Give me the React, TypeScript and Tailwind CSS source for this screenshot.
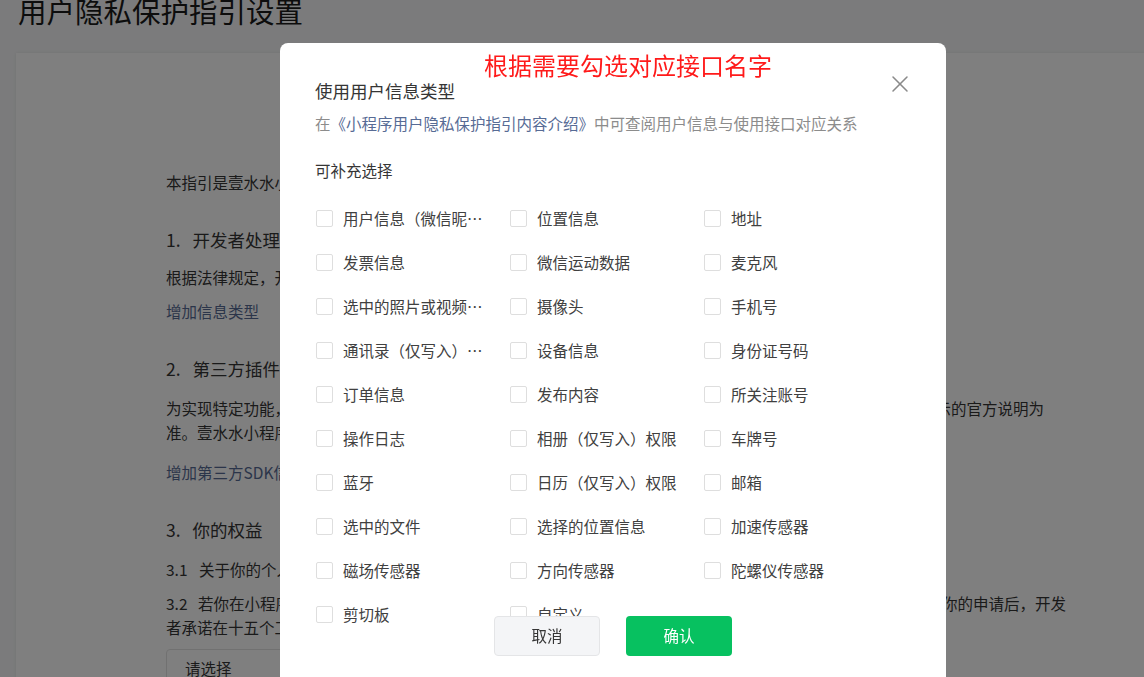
import { X } from "lucide-react";

const items = [
    "用户信息（微信昵称、头像）",
    "位置信息",
    "地址",
    "发票信息",
    "微信运动数据",
    "麦克风",
    "选中的照片或视频信息",
    "摄像头",
    "手机号",
    "通讯录（仅写入）权限",
    "设备信息",
    "身份证号码",
    "订单信息",
    "发布内容",
    "所关注账号",
    "操作日志",
    "相册（仅写入）权限",
    "车牌号",
    "蓝牙",
    "日历（仅写入）权限",
    "邮箱",
    "选中的文件",
    "选择的位置信息",
    "加速传感器",
    "磁场传感器",
    "方向传感器",
    "陀螺仪传感器",
    "剪切板",
    "自定义",
];

function Line({ children, className = "" }: { children: React.ReactNode; className?: string }) {
    return <div className={`whitespace-nowrap leading-[24px] ${className}`}>{children}</div>;
}

function PageBehind() {
    return (
        <div className="h-[677px] w-full overflow-hidden bg-[#f6f7f8] px-[16px]">
            <h1 className="-mt-[4px] pl-[2px] text-[28.5px] leading-[30px] text-[#1a1a1a]">用户隐私保护指引设置</h1>

            <div className="mt-[27px] h-[700px] w-[1200px] bg-white pl-[150px] pt-[117px] text-[15.5px] text-[#353535] shadow-[0_0_3px_rgba(0,0,0,0.08)]">
                <Line>本指引是壹水水小程序开发者为处理你的个人信息而制定。</Line>

                <Line className="mt-[34px] text-[17.5px]">
                    <span className="mr-[12px]">1.</span>开发者处理的信息
                </Line>
                <Line className="mt-[13px]">根据法律规定，开发者仅处理实现小程序功能所必要的信息。</Line>
                <Line className="mt-[10px] text-[#576b95]">增加信息类型</Line>

                <Line className="mt-[34px] text-[17.5px]">
                    <span className="mr-[12px]">2.</span>第三方插件信息/SDK信息
                </Line>
                <div className="mt-[15px]">
                    <Line>
                        为实现特定功能，开发者可能会接入由第三方提供的插件/SDK。第三方插件/SDK的个人信息处理规则，请以其公示的官方说明为
                    </Line>
                    <Line>准。壹水水小程序接入的第三方插件信息/SDK信息如下：</Line>
                </div>
                <Line className="mt-[16px] text-[#576b95]">增加第三方SDK信息</Line>

                <Line className="mt-[34px] text-[17.5px]">
                    <span className="mr-[12px]">3.</span>你的权益
                </Line>
                <Line className="mt-[15px]">
                    <span className="inline-block w-[33px]">3.1</span>关于你的个人信息，你可以通过以下方式与开发者联系。
                </Line>
                <div className="mt-[10px]">
                    <Line>
                        <span className="inline-block w-[32px]">3.2</span>
                        若你在小程序中注销了账号或撤回了授权，开发者将根据法律规定删除或匿名化处理你的个人信息，并在收到你的申请后，开发
                    </Line>
                    <Line>者承诺在十五个工作日内完成核查和处理。</Line>
                </div>
                <div className="mt-[10px] flex h-[40px] w-[330px] items-center rounded-[4px] border border-[#e2e2e2] px-[18px]">
                    请选择
                </div>
            </div>
        </div>
    );
}

function Checkbox() {
    return <div className="h-[17px] w-[17px] shrink-0 rounded-[2px] border border-[#dedede] bg-white" />;
}

function PermissionModal() {
    return (
        <div className="fixed left-[280px] top-[43px] h-[680px] w-[666px] rounded-[8px] bg-white px-[35px] pt-[36px] text-[#353535]">
            <div className="absolute left-0 right-0 top-[6px] pl-[30px] text-center text-[24px] leading-[32px] text-[#ff1a1a]">
                根据需要勾选对应接口名字
            </div>
            <button className="absolute right-[32px] top-[27px] text-[#8a8a8a]">
                <X className="h-[28px] w-[28px]" strokeWidth={1.3} />
            </button>

            <div className="text-[17.5px] leading-[24px]">使用用户信息类型</div>
            <div className="mt-[8px] text-[15.5px] leading-[24px] text-[#8c8c8c]">
                在<span className="text-[#576b95]">《小程序用户隐私保护指引内容介绍》</span>中可查阅用户信息与使用接口对应关系
            </div>

            <div className="mt-[23px] text-[15.5px] leading-[24px]">可补充选择</div>

            <div className="mt-[14px] grid w-[582px] grid-cols-3">
                {items.map((label) => (
                    <div key={label} className="flex h-[44px] items-center pl-[1px]">
                        <Checkbox />
                        <span className="ml-[10px] max-w-[141px] truncate text-[15.5px] leading-[24px] text-[#404040]">
                            {label}
                        </span>
                    </div>
                ))}
            </div>

            <div className="absolute left-0 right-0 top-[573px] flex justify-center gap-[26px]">
                <button className="h-[40px] w-[106px] rounded-[4px] border border-[#e4e5e7] bg-[#f4f5f7] text-[15.5px] text-[#353535]">
                    取消
                </button>
                <button className="h-[40px] w-[106px] rounded-[4px] bg-[#07c160] text-[15.5px] text-white">
                    确认
                </button>
            </div>
        </div>
    );
}

export default function App() {
    return (
        <div className="relative h-[677px] w-full overflow-hidden font-['Noto_Sans_CJK_SC','Noto_Sans',sans-serif]">
            <PageBehind />
            <div className="fixed inset-0 bg-black/50" />
            <PermissionModal />
        </div>
    );
}
